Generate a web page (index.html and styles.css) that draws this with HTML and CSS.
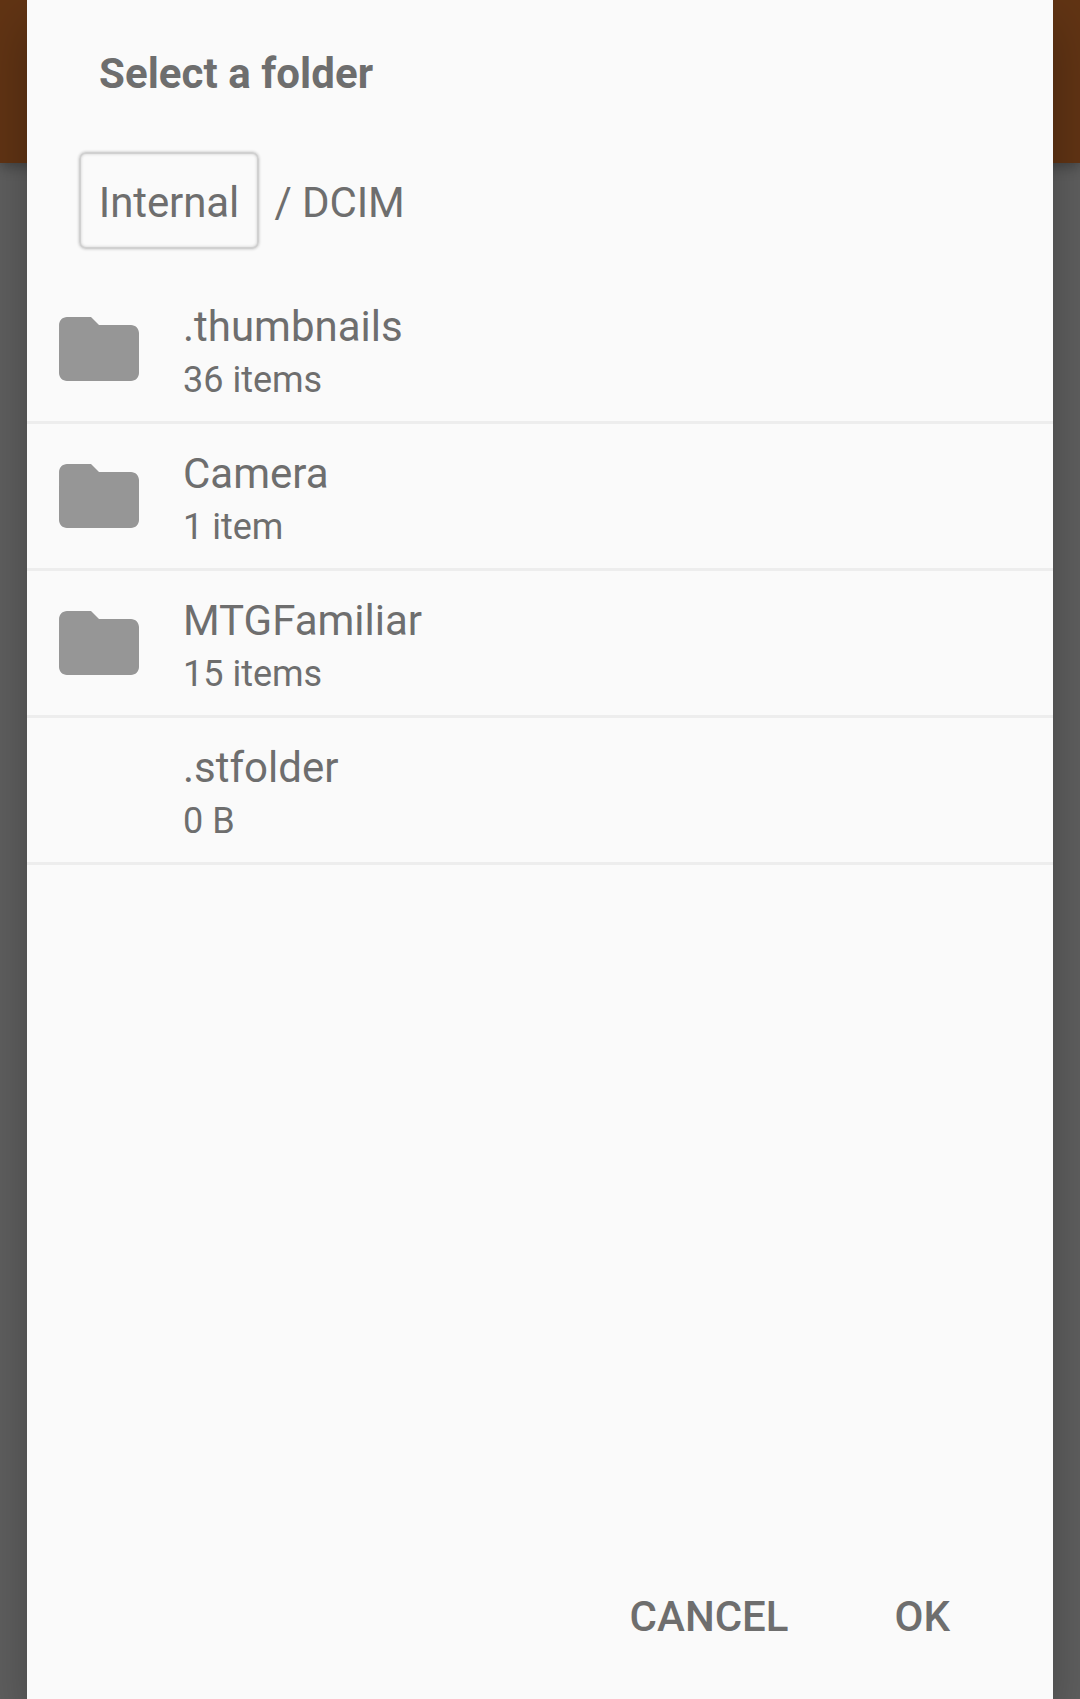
FILE: index.html
```html
<!DOCTYPE html>
<html lang="en">
<head>
<meta charset="utf-8">
<title>Select a folder</title>
<link rel="stylesheet" href="styles.css">
</head>
<body>
<div class="app-bar"></div>
<main class="dialog">
  <h1 class="title">Select a folder</h1>
  <nav class="path"><button class="crumb">Internal</button><span class="current">/ DCIM</span></nav>
  <ul class="list">
    <li class="row"><svg class="icon" viewBox="2 4 20 16"><path d="M10 4H4c-1.100 0-1.990.900-1.990 2L2 18c0 1.100.900 2 2 2h16c1.100 0 2-.900 2-2V8c0-1.100-.900-2-2-2h-8l-2-2z"/></svg><div class="text"><div class="name">.thumbnails</div><div class="detail">36 items</div></div></li>
    <li class="row"><svg class="icon" viewBox="2 4 20 16"><path d="M10 4H4c-1.100 0-1.990.900-1.990 2L2 18c0 1.100.900 2 2 2h16c1.100 0 2-.900 2-2V8c0-1.100-.900-2-2-2h-8l-2-2z"/></svg><div class="text"><div class="name">Camera</div><div class="detail">1 item</div></div></li>
    <li class="row"><svg class="icon" viewBox="2 4 20 16"><path d="M10 4H4c-1.100 0-1.990.900-1.990 2L2 18c0 1.100.900 2 2 2h16c1.100 0 2-.900 2-2V8c0-1.100-.900-2-2-2h-8l-2-2z"/></svg><div class="text"><div class="name">MTGFamiliar</div><div class="detail">15 items</div></div></li>
    <li class="row"><span class="icon"></span><div class="text"><div class="name">.stfolder</div><div class="detail">0 B</div></div></li>
  </ul>
  <footer class="actions"><button class="action">CANCEL</button><button class="action">OK</button></footer>
</main>
</body>
</html>
```
FILE: styles.css
```css
* { box-sizing: border-box; }
body { margin: 0; height: 1699px; overflow: hidden; background: #5f5f5f; font-family: Roboto, sans-serif; color: #6e6e6e; position: relative; }
button { font: inherit; color: inherit; background: none; border: 0; padding: 0; }
.app-bar { position: absolute; top: 0; left: 0; right: 0; height: 163px; background: #613414; box-shadow: 0 4px 12px rgba(0,0,0,.3); }
.dialog { position: relative; display: flex; flex-direction: column; width: 1026px; height: 1699px; margin: 0 27px; background: #fafafa; box-shadow: 0 24px 48px rgba(0,0,0,.27); }
.title { margin: 0; padding: 49px 72px 0; height: 152px; font-size: 42px; line-height: 49px; font-weight: 700; letter-spacing: .05px; }
.path { display: flex; height: 125px; padding-left: 52px; font-size: 42px; line-height: 49px; }
.crumb { width: 180px; height: 97px; border: 2px solid #d0d0d0; border-radius: 7px; padding-top: 4px; letter-spacing: -.1px; box-shadow: 0 0 3px #bbb, inset 0 0 3px #ccc; }
.current { padding: 26px 0 0 15.500px; letter-spacing: -.1px; }
.list { list-style: none; margin: 0; padding: 0; }
.row { display: flex; height: 147px; border-bottom: 3px solid #ededed; }
.icon { width: 80px; height: 64px; margin: 40px 44px 0 32px; fill: #969696; }
.text { padding-top: 25px; }
.name { font-size: 42px; line-height: 49px; }
.detail { font-size: 36px; line-height: 42px; margin-top: 8px; }
.actions { display: flex; justify-content: flex-end; gap: 106px; margin-top: auto; padding: 0 103px 58px 0; font-size: 42px; line-height: 49px; font-weight: 500; }
```
